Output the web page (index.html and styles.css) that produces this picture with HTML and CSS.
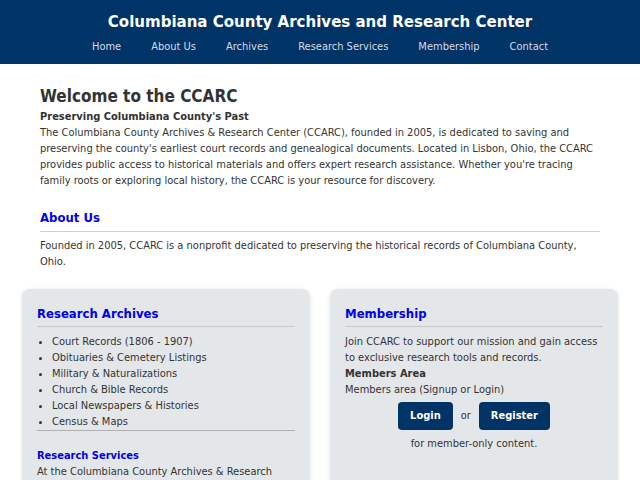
FILE: index.html
```html
<!DOCTYPE html>
<html lang="en">
<head>
<meta charset="utf-8">
<title>CCARC</title>
<link rel="stylesheet" href="styles.css">
</head>
<body>
<header class="site-header">
  <h1 class="site-title">Columbiana County Archives and Research Center</h1>
  <nav class="site-nav">
    <a href="#">Home</a>
    <a href="#">About Us</a>
    <a href="#">Archives</a>
    <a href="#">Research Services</a>
    <a href="#">Membership</a>
    <a href="#">Contact</a>
  </nav>
</header>
<main class="main">
  <section class="intro">
    <h2 class="welcome">Welcome to the CCARC</h2>
    <p class="tagline">Preserving Columbiana County's Past</p>
    <p>The Columbiana County Archives &amp; Research Center (CCARC), founded in 2005, is dedicated to saving and preserving the county's earliest court records and genealogical documents. Located in Lisbon, Ohio, the CCARC provides public access to historical materials and offers expert research assistance. Whether you're tracing family roots or exploring local history, the CCARC is your resource for discovery.</p>
  </section>
  <section class="about">
    <h3 class="section-title">About Us</h3>
    <p>Founded in 2005, CCARC is a nonprofit dedicated to preserving the historical records of Columbiana County, Ohio.</p>
  </section>
</main>
<div class="cards">
  <section class="card">
    <h3 class="card-title">Research Archives</h3>
    <ul class="card-list">
      <li>Court Records (1806 - 1907)</li>
      <li>Obituaries &amp; Cemetery Listings</li>
      <li>Military &amp; Naturalizations</li>
      <li>Church &amp; Bible Records</li>
      <li>Local Newspapers &amp; Histories</li>
      <li>Census &amp; Maps</li>
    </ul>
    <h4 class="sub-title">Research Services</h4>
    <p>At the Columbiana County Archives &amp; Research Center, our staff can help you locate records and plan your research.</p>
  </section>
  <section class="card">
    <h3 class="card-title">Membership</h3>
    <p>Join CCARC to support our mission and gain access to exclusive research tools and records.</p>
    <p class="members-head">Members Area</p>
    <p>Members area (Signup or Login)</p>
    <div class="auth">
      <a class="btn" href="#">Login</a>
      <span class="or">or</span>
      <a class="btn" href="#">Register</a>
    </div>
    <p class="center">for member-only content.</p>
  </section>
</div>
</body>
</html>
```

FILE: styles.css
```css
* { box-sizing: border-box; }
html, body { margin: 0; padding: 0; }
body {
  font-family: "DejaVu Sans Condensed", "DejaVu Sans", sans-serif;
  font-stretch: condensed;
  font-size: 11px;
  line-height: 16px;
  color: #333;
  background: #fff;
}
p { margin: 0; }
.site-header {
  background: #003366;
  color: #fff;
  text-align: center;
  padding: 11px 0 10px;
  height: 64px;
}
.site-title {
  margin: 0;
  font-size: 16.7px;
  line-height: 20px;
  font-weight: bold;
}
.site-nav {
  display: flex;
  justify-content: center;
  gap: 30px;
  margin-top: 8px;
  line-height: 16px;
}
.site-nav a {
  color: #d4dce6;
  text-decoration: none;
  font-size: 11px;
}
.main {
  width: 560px;
  margin: 0 auto;
  padding-top: 22px;
}
.welcome {
  margin: 0 0 3px;
  font-size: 17px;
  line-height: 20px;
  font-weight: bold;
  color: #333;
}
.tagline {
  font-weight: bold;
}
.about { margin-top: 20px; }
.section-title {
  margin: 0 0 6px;
  color: #0000ee;
  font-size: 13px;
  line-height: 18px;
  padding-bottom: 4px;
  border-bottom: 1px solid #cfcfcf;
}
.cards {
  display: grid;
  grid-template-columns: 1fr 1fr;
  gap: 20px;
  margin: 19px 22px 0 22px;
}
.card {
  background: #e4e7ea;
  border-radius: 8px;
  box-shadow: 0 1px 4px rgba(0,0,0,0.12);
  padding: 17px 15px 20px;
  height: 240px;
}
.card-title {
  margin: 0 0 7px;
  color: #0000ee;
  font-size: 13px;
  line-height: 16px;
  padding-bottom: 4px;
  border-bottom: 1px solid #c8c8c8;
}
.card-list {
  margin: 0;
  padding: 0 0 0 15px;
  border-bottom: 1px solid #b0b0b0;
  list-style: disc;
}
.sub-title {
  margin: 17px 0 0;
  color: #0000ee;
  font-size: 11px;
  line-height: 16px;
  font-weight: bold;
}
.members-head { font-weight: bold; }
.auth {
  display: flex;
  justify-content: center;
  align-items: center;
  gap: 8px;
  margin-top: 4px;
}
.btn {
  display: inline-block;
  background: #003366;
  color: #fff;
  font-weight: bold;
  text-decoration: none;
  padding: 6px 12px;
  border-radius: 4px;
  line-height: 16px;
}
.or { padding: 0; }
.center { text-align: center; margin-top: 6px; }
```
